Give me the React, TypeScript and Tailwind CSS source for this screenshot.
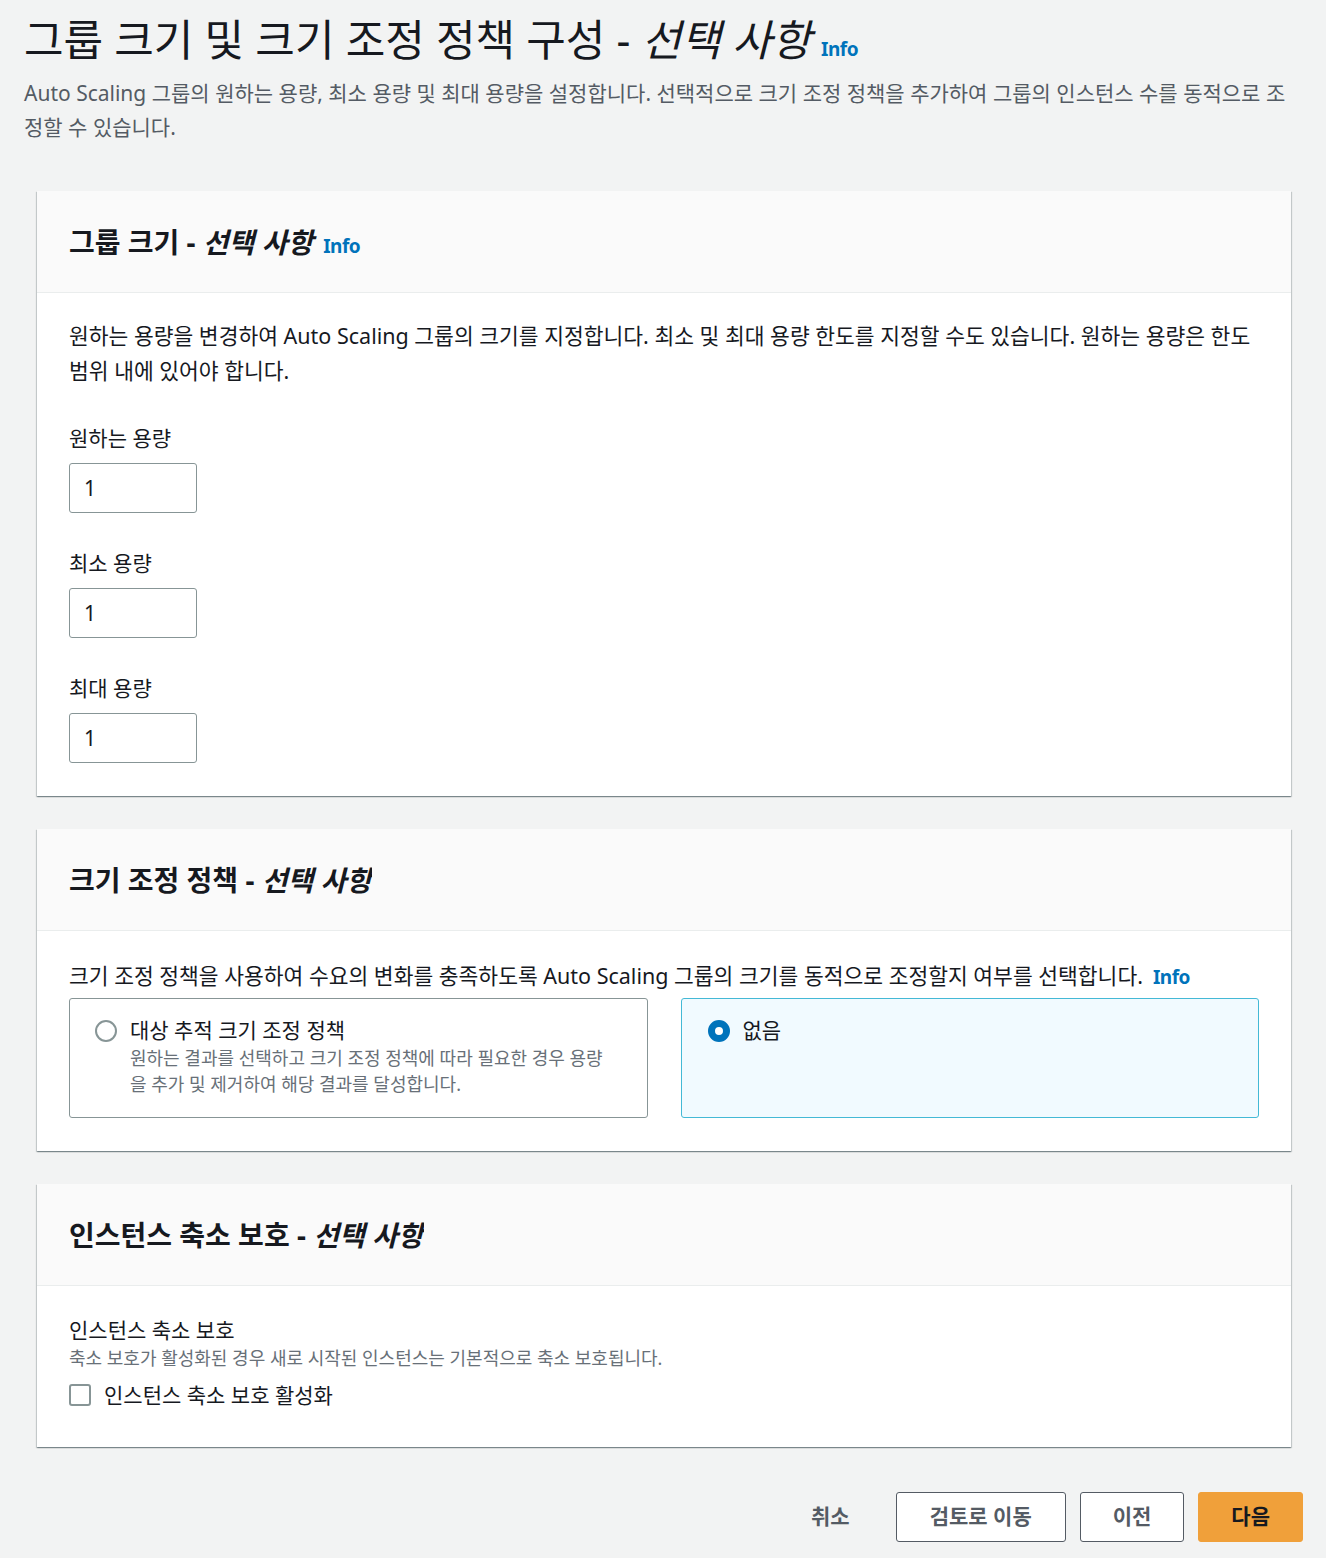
import { useState } from 'react';

const font = 'font-["Noto_Sans","Noto_Sans_CJK_KR",sans-serif]';

const Info = ({ size = 'text-[19px]' }: { size?: string }) => (
  <a className={`${size} leading-none font-bold text-[#0073bb] ml-[10px] tracking-tight`}>Info</a>
);

const Card = ({ title, children }: { title: React.ReactNode; children: React.ReactNode }) => (
  <section className="ml-[13px] mr-[12px] bg-white shadow-[0_1px_1px_0_rgba(0,28,36,0.3),1px_1px_1px_0_rgba(0,28,36,0.15),-1px_1px_1px_0_rgba(0,28,36,0.15)]">
    <div className="h-[102px] bg-[#fafafa] border-b border-[#eaeded] px-[32px] flex items-center">
      <h2 className="text-[28px] font-bold text-[#16191f] leading-[36px]">{title}</h2>
    </div>
    <div className="px-[32px]">{children}</div>
  </section>
);

const NumberField = ({ label, value }: { label: string; value: string }) => (
  <div className="mt-[35px]">
    <div className="text-[21px] leading-[30px] text-[#16191f]">{label}</div>
    <input
      defaultValue={value}
      className="mt-[10px] w-[128px] h-[50px] border border-[#879596] rounded-[3px] px-[14px] text-[21px] text-[#16191f] outline-none"
    />
  </div>
);

const Radio = ({ checked }: { checked: boolean }) =>
  checked ? (
    <span className="w-[22px] h-[22px] rounded-full border-[7px] border-[#0073bb] bg-white shrink-0" />
  ) : (
    <span className="w-[22px] h-[22px] rounded-full border-2 border-[#879596] bg-white shrink-0" />
  );

export default function App() {
  const [policy, setPolicy] = useState<'target' | 'none'>('none');
  const [protect, setProtect] = useState(false);

  return (
    <div className={`min-h-screen bg-[#f2f3f3] pl-[24px] pr-[23px] pt-[14px] pb-[18px] ${font}`}>
      <h1 className="text-[43px] leading-[52px] text-[#16191f]">
        그룹 크기 및 크기 조정 정책 구성 - <i>선택 사항</i>
        <Info />
      </h1>
      <p className="mt-[10px] text-[21px] leading-[34px] text-[#545b64]">
        Auto Scaling 그룹의 원하는 용량, 최소 용량 및 최대 용량을 설정합니다. 선택적으로 크기 조정 정책을 추가하여 그룹의 인스턴스 수를 동적으로 조정할 수 있습니다.
      </p>

      <div className="mt-[47px] flex flex-col gap-[33px]">
        <Card
          title={
            <>
              그룹 크기 - <i>선택 사항</i>
              <Info />
            </>
          }
        >
          <div className="pt-[25px] pb-[33px]">
            <p className="text-[21.5px] leading-[35px] text-[#16191f] break-keep">
              원하는 용량을 변경하여 Auto Scaling 그룹의 크기를 지정합니다. 최소 및 최대 용량 한도를 지정할 수도 있습니다. 원하는 용량은 한도 범위 내에 있어야 합니다.
            </p>
            <NumberField label="원하는 용량" value="1" />
            <NumberField label="최소 용량" value="1" />
            <NumberField label="최대 용량" value="1" />
          </div>
        </Card>

        <Card
          title={
            <>
              크기 조정 정책 - <i className="inline-block overflow-hidden align-bottom">선택 사항</i>
            </>
          }
        >
          <div className="pt-[27px] pb-[33px]">
            <p className="text-[21.5px] leading-[35px] text-[#16191f]">
              크기 조정 정책을 사용하여 수요의 변화를 충족하도록 Auto Scaling 그룹의 크기를 동적으로 조정할지 여부를 선택합니다.
              <Info />
            </p>
            <div className="mt-[5px] grid grid-cols-2 gap-[33px]">
              <button
                onClick={() => setPolicy('target')}
                className={`h-[120px] text-left rounded-[3px] border pl-[25px] pr-[40px] pt-[16px] flex items-start gap-[13px] ${
                  policy === 'target' ? 'border-[#44b9d6] bg-[#f1faff]' : 'border-[#879596] bg-white'
                }`}
              >
                <span className="mt-[5px] flex">
                  <Radio checked={policy === 'target'} />
                </span>
                <span>
                  <span className="block text-[21px] leading-[30px] text-[#16191f]">대상 추적 크기 조정 정책</span>
                  <span className="block text-[18px] leading-[26px] text-[#687078]">
                    원하는 결과를 선택하고 크기 조정 정책에 따라 필요한 경우 용량을 추가 및 제거하여 해당 결과를 달성합니다.
                  </span>
                </span>
              </button>
              <button
                onClick={() => setPolicy('none')}
                className={`h-[120px] text-left rounded-[3px] border px-[26px] pt-[16px] flex items-start gap-[13px] ${
                  policy === 'none' ? 'border-[#44b9d6] bg-[#f1faff]' : 'border-[#879596] bg-white'
                }`}
              >
                <span className="mt-[5px] flex">
                  <Radio checked={policy === 'none'} />
                </span>
                <span className="text-[21px] leading-[30px] text-[#16191f]">없음</span>
              </button>
            </div>
          </div>
        </Card>

        <Card
          title={
            <>
              인스턴스 축소 보호 - <i className="inline-block overflow-hidden align-bottom">선택 사항</i>
            </>
          }
        >
          <div className="pt-[29px] pb-[37px]">
            <div className="text-[21px] leading-[30px] text-[#16191f]">인스턴스 축소 보호</div>
            <div className="text-[18px] leading-[26px] text-[#687078]">
              축소 보호가 활성화된 경우 새로 시작된 인스턴스는 기본적으로 축소 보호됩니다.
            </div>
            <label className="mt-[9px] flex items-center gap-[13px] cursor-pointer" onClick={() => setProtect(!protect)}>
              <span
                className={`w-[22px] h-[22px] rounded-[3px] border-2 flex items-center justify-center ${
                  protect ? 'bg-[#0073bb] border-[#0073bb]' : 'border-[#879596] bg-white'
                }`}
              >
                {protect && (
                  <svg viewBox="0 0 16 16" className="w-[14px] h-[14px]">
                    <path d="M3 8l3 3 7-7" stroke="white" strokeWidth="2.5" fill="none" />
                  </svg>
                )}
              </span>
              <span className="text-[21px] leading-[30px] text-[#16191f]">인스턴스 축소 보호 활성화</span>
            </label>
          </div>
        </Card>
      </div>

      <div className="mt-[45px] flex justify-end items-center gap-[14px]">
        <button className="h-[50px] px-[32px] text-[21px] font-bold text-[#545b64]">취소</button>
        <button className="h-[50px] px-[33px] text-[21px] font-bold text-[#545b64] bg-white border border-[#545b64] rounded-[3px]">
          검토로 이동
        </button>
        <button className="h-[50px] px-[32px] text-[21px] font-bold text-[#545b64] bg-white border border-[#545b64] rounded-[3px]">
          이전
        </button>
        <button className="h-[50px] px-[32px] text-[21px] font-bold text-[#16191f] bg-[#f0a03a] border border-[#f0a03a] rounded-[3px]">
          다음
        </button>
      </div>
    </div>
  );
}
